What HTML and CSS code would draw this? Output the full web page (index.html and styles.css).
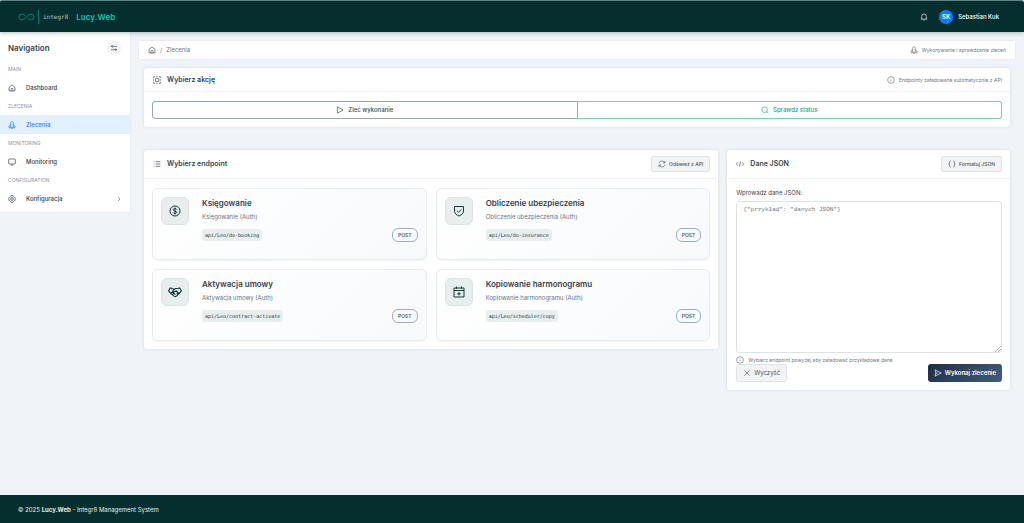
FILE: index.html
```
<!DOCTYPE html>
<html lang="pl">
<head>
    <meta charset="UTF-8">
    <meta name="viewport" content="width=device-width, initial-scale=1.0">
    <title>Lucy.Web - Zlecenia</title>
    <link rel="stylesheet" href="styles.css">
</head>
<body>

<svg class="sprite" xmlns="http://www.w3.org/2000/svg">
    <symbol id="home" viewBox="0 0 24 24"><path d="M3 10.500 12 2.500l9 8V19a2 2 0 0 1-2 2H5a2 2 0 0 1-2-2zM9 21v-5a3 3 0 0 1 6 0v5"/></symbol>
    <symbol id="rocket" viewBox="0 0 24 24"><path d="M7 18V9c0-3 2-6 5-8 3 2 5 5 5 8v9zM7 11l-4 5v5l4-1M17 11l4 5v5l-4-1M9 18v4h6v-4"/><path d="M12 8v4"/></symbol>
    <symbol id="monitor" viewBox="0 0 24 24"><rect x="2" y="3" width="20" height="15" rx="2"/><path d="M8 21.500h8"/></symbol>
    <symbol id="gear" viewBox="0 0 24 24"><path d="M9 2h6l1 3 3 1 3 3-1 3 1 3-3 3-3 1-1 3H9l-1-3-3-1-3-3 1-3-1-3 3-3 3-1z"/><circle cx="12" cy="12" r="4"/></symbol>
    <symbol id="swap" viewBox="0 0 24 24"><path d="M21 7H4M8 3 4 7l4 4M3 17h17M16 13l4 4-4 4"/></symbol>
    <symbol id="chevron" viewBox="0 0 24 24"><path d="m8 4 8 8-8 8"/></symbol>
    <symbol id="bell" viewBox="0 0 24 24"><path d="M5 18v-8a7 7 0 0 1 14 0v8M2.500 18.500h19M10 21.500h4"/></symbol>
    <symbol id="select" viewBox="0 0 24 24"><rect x="7" y="7" width="10" height="10" rx="2"/><path d="M2 6V2h4M18 2h4v4M22 18v4h-4M6 22H2v-4M10 2h4M10 22h4M2 10v4M22 10v4"/></symbol>
    <symbol id="info" viewBox="0 0 24 24"><circle cx="12" cy="12" r="10"/><path d="M12 11v6M12 7v1.500"/></symbol>
    <symbol id="play" viewBox="0 0 24 24"><path d="M4 2.500 21 12 4 21.500z"/></symbol>
    <symbol id="search" viewBox="0 0 24 24"><circle cx="11" cy="11" r="8.500"/><path d="m17 17 5 5"/></symbol>
    <symbol id="list" viewBox="0 0 24 24"><path d="M8 5h14M8 12h14M8 19h14M2 5h2M2 12h2M2 19h2"/></symbol>
    <symbol id="refresh" viewBox="0 0 24 24"><path d="M3 10C5 3 14 1 19.500 7M21 3v6h-6M21 14c-2 7-11 9-16.500 3M3 21v-6h6"/></symbol>
    <symbol id="code" viewBox="0 0 24 24"><path d="m6 7-5 5 5 5M18 7l5 5-5 5M14 4l-4 16"/></symbol>
    <symbol id="braces" viewBox="0 0 24 24"><path d="M8 3H6.500Q5 3 5 5v4q0 3-3 3 3 0 3 3v4q0 2 1.500 2H8M16 3h1.500Q19 3 19 5v4q0 3 3 3-3 0-3 3v4q0 2-1.500 2H16"/></symbol>
    <symbol id="close" viewBox="0 0 24 24"><path d="m4 4 16 16M20 4 4 20"/></symbol>
    <symbol id="send" viewBox="0 0 24 24"><path d="M3 2.500 22 12 3 21.500 5.500 12zM5.500 12H13"/></symbol>
    <symbol id="dollar" viewBox="0 0 24 24"><circle cx="12" cy="12" r="10"/><path d="M15.500 9c-.5-1.500-2-2-3.500-2-2 0-3.500.8-3.500 2.500 0 3.500 7 1.500 7 5 0 1.700-1.500 2.500-3.500 2.500-1.500 0-3-.5-3.500-2M12 5v14"/></symbol>
    <symbol id="shield" viewBox="0 0 24 24"><path d="M3 3h18v9c0 5-4 8-9 10-5-2-9-5-9-10zM8 11.500l3 3 5.500-5.500"/></symbol>
    <symbol id="handshake" viewBox="0 0 24 24"><path d="M4 5 1 10l3 4 7 5.500q1.500 1 3 0L20 14l3-4-3-5-3 1h-4.500L8 10.500c1.500 2 4 1.500 6-.5l5 4.500M4 5l4 1.500 3.500.5M5 14l2-2 3 2.500M8 16l2-2 3 2.500M15 13.500l2 3"/></symbol>
    <symbol id="calendar" viewBox="0 0 24 24"><path d="M2 4h20v18H2zM2 9h20M7 1v5M17 1v5M12 12v7M8.500 15.500h7"/></symbol>
</svg>

<header class="topbar">
    <a href="#" class="brand">
        <svg class="brand-mark" viewBox="0 0 36 16"><path d="M15 5C13 3 11 2 8 2a6 6 0 0 0 0 12C17 14 19 2 28 2a6 6 0 0 1 0 12c-3 0-5-1-7-3"/></svg>
        <span class="brand-company">integr8</span>
        <span class="brand-name">Lucy.Web</span>
    </a>
    <div class="topbar-right">
        <button class="bell" type="button" aria-label="Powiadomienia"><svg class="icon"><use href="#bell"/></svg></button>
        <a href="#" class="user"><span class="avatar">SK</span>Sebastian Kuk</a>
    </div>
</header>

<div class="layout">
    <aside class="sidebar">
        <div class="sidebar-head">
            <h2>Navigation</h2>
            <button class="toggle" type="button" aria-label="Toggle"><svg class="icon"><use href="#swap"/></svg></button>
        </div>
        <nav>
            <h3>MAIN</h3>
            <a href="#" class="nav-link"><svg class="icon"><use href="#home"/></svg>Dashboard</a>
            <h3>ZLECENIA</h3>
            <a href="#" class="nav-link active"><svg class="icon"><use href="#rocket"/></svg>Zlecenia</a>
            <h3>MONITORING</h3>
            <a href="#" class="nav-link"><svg class="icon"><use href="#monitor"/></svg>Monitoring</a>
            <h3>CONFIGURATION</h3>
            <a href="#" class="nav-link"><svg class="icon"><use href="#gear"/></svg>Konfiguracja<svg class="icon arrow"><use href="#chevron"/></svg></a>
        </nav>
    </aside>

    <main class="content">
        <div class="breadcrumbs">
            <a href="#" aria-label="Dashboard"><svg class="icon"><use href="#home"/></svg></a>
            <span>/</span>
            <span>Zlecenia</span>
            <span class="note"><svg class="icon"><use href="#rocket"/></svg>Wykonywanie i sprawdzanie zleceń</span>
        </div>

        <div class="page">
            <section class="card action-card">
                <div class="card-head small">
                    <svg class="icon"><use href="#select"/></svg>
                    <h2>Wybierz akcję</h2>
                    <span class="note"><svg class="icon"><use href="#info"/></svg>Endpointy załadowane automatycznie z API</span>
                </div>
                <div class="card-body">
                    <div class="btn-group">
                        <button class="run" type="button"><svg class="icon"><use href="#play"/></svg>Zleć wykonanie</button>
                        <button class="check" type="button"><svg class="icon"><use href="#search"/></svg>Sprawdź status</button>
                    </div>
                </div>
            </section>

            <section class="card endpoint-card">
                <div class="card-head">
                    <svg class="icon"><use href="#list"/></svg>
                    <h2>Wybierz endpoint</h2>
                    <button class="btn btn-small" type="button"><svg class="icon"><use href="#refresh"/></svg>Odśwież z API</button>
                </div>
                <div class="card-body tiles">
                    <article class="tile">
                        <div class="tile-icon"><svg class="icon"><use href="#dollar"/></svg></div>
                        <div class="tile-text">
                            <h3>Księgowanie</h3>
                            <p>Księgowanie (Auth)</p>
                            <div class="tile-row"><code>api/Leo/do-booking</code><span class="method">POST</span></div>
                        </div>
                    </article>
                    <article class="tile">
                        <div class="tile-icon"><svg class="icon"><use href="#shield"/></svg></div>
                        <div class="tile-text">
                            <h3>Obliczenie ubezpieczenia</h3>
                            <p>Obliczenie ubezpieczenia (Auth)</p>
                            <div class="tile-row"><code>api/Leo/do-insurance</code><span class="method">POST</span></div>
                        </div>
                    </article>
                    <article class="tile">
                        <div class="tile-icon"><svg class="icon wide"><use href="#handshake"/></svg></div>
                        <div class="tile-text">
                            <h3>Aktywacja umowy</h3>
                            <p>Aktywacja umowy (Auth)</p>
                            <div class="tile-row"><code>api/Leo/contract-activate</code><span class="method">POST</span></div>
                        </div>
                    </article>
                    <article class="tile">
                        <div class="tile-icon"><svg class="icon"><use href="#calendar"/></svg></div>
                        <div class="tile-text">
                            <h3>Kopiowanie harmonogramu</h3>
                            <p>Kopiowanie harmonogramu (Auth)</p>
                            <div class="tile-row"><code>api/Leo/scheduler/copy</code><span class="method">POST</span></div>
                        </div>
                    </article>
                </div>
            </section>

            <section class="card json-card">
                <div class="card-head">
                    <svg class="icon"><use href="#code"/></svg>
                    <h2>Dane JSON</h2>
                    <button class="btn btn-small" type="button"><svg class="icon"><use href="#braces"/></svg>Formatuj JSON</button>
                </div>
                <form class="card-body json-form">
                    <label for="json">Wprowadź dane JSON:</label>
                    <textarea id="json" name="json" placeholder='{"przykład": "danych JSON"}'></textarea>
                    <p class="help"><svg class="icon"><use href="#info"/></svg>Wybierz endpoint powyżej aby załadować przykładowe dane</p>
                    <div class="form-actions">
                        <button class="btn" type="reset"><svg class="icon"><use href="#close"/></svg>Wyczyść</button>
                        <button class="btn btn-primary" type="button"><svg class="icon"><use href="#send"/></svg>Wykonaj zlecenie</button>
                    </div>
                </form>
            </section>
        </div>
    </main>
</div>

<footer class="footer">© 2025 <b>Lucy.Web</b> - Integr8 Management System</footer>

</body>
</html>
```
FILE: styles.css
```
* {
  box-sizing: border-box;
}

body {
  margin: 0;
  min-height: 100vh;
  display: flex;
  flex-direction: column;
  background-color: #f0f3f8;
  color: #343f4b;
  font-family: Inter, "Liberation Sans", sans-serif;
  font-size: 6px;
  line-height: 8px;
}

h2, h3, p {
  margin: 0;
}

a {
  color: inherit;
  text-decoration: none;
}

button {
  font: inherit;
  color: inherit;
  cursor: pointer;
}

.sprite {
  display: none;
}

.icon {
  width: 8px;
  height: 8px;
  flex: none;
  fill: none;
  stroke: currentColor;
  stroke-width: 2;
}

/* top bar */
.topbar {
  height: 32px;
  display: flex;
  align-items: center;
  justify-content: space-between;
  padding: 0 25px 0 18px;
  background-color: #042f2e;
  border-top: 1px solid #5f8584;
  border-radius: 2px 3px 0 0;
  box-shadow: 0 1px 4px rgba(4, 47, 46, 0.3);
  color: white;
  z-index: 1;
}

.brand {
  display: flex;
  align-items: center;
}

.brand-mark {
  width: 17px;
  height: 8px;
  fill: none;
  stroke: #12857b;
  stroke-width: 2;
}

.brand-company {
  margin-left: 3px;
  padding: 3px 8px 3px 4px;
  border-left: 1px solid #0f766e;
  color: #b4c4c3;
  font-family: "DejaVu Sans Mono", monospace;
  font-size: 6px;
}

.brand-name {
  color: #14b8a6;
  font-size: 8px;
  font-weight: 700;
}

.topbar-right {
  display: flex;
  align-items: center;
  gap: 11px;
}

.bell {
  display: flex;
  padding: 0;
  border: 0;
  background: none;
}

.user {
  display: flex;
  align-items: center;
  gap: 5px;
  font-weight: 500;
}

.avatar {
  width: 14px;
  height: 14px;
  border-radius: 50%;
  background-color: #0d7dfd;
  font-weight: 600;
  line-height: 14px;
  text-align: center;
}

.layout {
  flex: 1;
  display: flex;
  align-items: flex-start;
}

/* sidebar */
.sidebar {
  width: 130px;
  flex: none;
  padding-bottom: 4px;
  background-color: white;
  box-shadow: 0 0 2px rgba(50, 70, 90, 0.1);
}

.sidebar-head {
  height: 28px;
  display: flex;
  align-items: center;
  justify-content: space-between;
  padding: 4px 9px 0 8px;
}

.sidebar-head h2 {
  font-size: 8px;
  font-weight: 600;
}

.toggle {
  width: 14px;
  height: 14px;
  display: flex;
  align-items: center;
  justify-content: center;
  padding: 0;
  border: 0;
  border-radius: 50%;
  background-color: #f0f3f6;
}

.sidebar h3 {
  padding: 5px 8px;
  color: #8b95a0;
  font-size: 5px;
  font-weight: 400;
}

.nav-link {
  height: 19px;
  display: flex;
  align-items: center;
  gap: 10px;
  padding: 0 8px;
  font-weight: 500;
}

.nav-link.active {
  background-color: #e2f0ff;
  color: #1784ff;
}

.arrow {
  width: 6px;
  height: 6px;
  margin-left: auto;
}

/* content */
.content {
  flex: 1;
  min-width: 0;
  padding: 9px 9px 0;
}

.breadcrumbs {
  height: 18px;
  display: flex;
  align-items: center;
  gap: 4px;
  padding: 0 9px;
  background-color: white;
  box-shadow: 0 0 2px rgba(50, 70, 90, 0.1);
  color: #6b7682;
}

.breadcrumbs a {
  display: flex;
  color: #343f4b;
}

.note {
  display: flex;
  align-items: center;
  gap: 4px;
  margin-left: auto;
  color: #6b7682;
  font-size: 5px;
}

.page {
  display: grid;
  grid-template-columns: repeat(12, 1fr);
  align-items: start;
  column-gap: 9px;
  row-gap: 23px;
  padding: 9px 5px;
}

.card {
  background-color: white;
  border-radius: 3px;
  box-shadow: 0 0 3px rgba(50, 70, 90, 0.15);
}

.action-card {
  grid-column: span 12;
}

.endpoint-card {
  grid-column: span 8;
}

.json-card {
  grid-column: span 4;
}

.card-head {
  height: 29px;
  display: flex;
  align-items: center;
  gap: 6px;
  padding: 0 8px 0 9px;
  border-bottom: 1px solid #f0f4f6;
}

.card-head.small {
  height: 24px;
}

.card-head h2 {
  font-size: 7px;
  font-weight: 600;
}

.card-body {
  padding: 9px 8px 8px;
}

.btn-group {
  display: flex;
}

.btn-group button {
  flex: 1;
  height: 18px;
  display: flex;
  align-items: center;
  justify-content: center;
  gap: 4px;
  padding: 0;
  background-color: white;
  font-weight: 500;
}

.btn-group .run {
  border: 1px solid #8fa5b2;
  border-radius: 3px 0 0 3px;
  color: #2b5453;
}

.btn-group .check {
  border: 1px solid #7fccae;
  border-left: 0;
  border-radius: 0 3px 3px 0;
  color: #1fa874;
}

.btn {
  height: 18px;
  display: flex;
  align-items: center;
  gap: 3px;
  padding: 0 6px;
  border: 1px solid #dfe3e7;
  border-radius: 3px;
  background-color: #f1f3f5;
  color: #4a5561;
}

.btn-small {
  height: 16px;
  margin-left: auto;
  border-radius: 2px;
  font-size: 5px;
  font-weight: 500;
}

.btn-primary {
  border: 0;
  background: linear-gradient(135deg, #1e2f43, #415d7e);
  color: white;
  font-weight: 600;
}

/* endpoint tiles */
.tiles {
  display: grid;
  grid-template-columns: 1fr 1fr;
  gap: 9px;
}

.tile {
  display: flex;
  gap: 13px;
  padding: 8px 8px 17px;
  border: 1px solid #e6ebee;
  border-radius: 6px;
  background: linear-gradient(135deg, #ffffff, #f7f9fb);
  box-shadow: 0 1px 2px rgba(50, 70, 90, 0.06);
}

.tile-icon {
  width: 28px;
  height: 28px;
  flex: none;
  display: flex;
  align-items: center;
  justify-content: center;
  border: 1px solid #dbe3e3;
  border-radius: 6px;
  background-color: #e8eded;
  color: #0f3d3c;
}

.tile-icon .icon {
  width: 12px;
  height: 12px;
}

.tile-icon .wide {
  width: 14px;
  height: 14px;
}

.tile-text {
  flex: 1;
  min-width: 0;
}

.tile-text h3 {
  font-size: 8px;
  font-weight: 600;
  line-height: 13px;
}

.tile-text p {
  color: #6b7682;
  line-height: 13px;
}

.tile-row {
  display: flex;
  align-items: center;
  justify-content: space-between;
  padding-top: 5px;
}

code {
  padding: 2px 3px;
  border-radius: 3px;
  background-color: #e8eeed;
  color: #0f3d3c;
  font-family: "DejaVu Sans Mono", monospace;
  font-size: 5px;
}

.method {
  padding: 2px 5px;
  border: 1px solid #9dadc0;
  border-radius: 6px;
  color: #4d6078;
  font-size: 5px;
  font-weight: 600;
}

/* json form */
.json-form {
  display: flex;
  flex-direction: column;
  padding-left: 9px;
}

.json-form label {
  padding: 1px 0 4px;
}

.json-form textarea {
  height: 152px;
  padding: 4px 6px;
  border: 1px solid #dde2e7;
  border-radius: 3px;
  background-color: white;
  color: #343f4b;
  font-family: "Liberation Mono", monospace;
  font-size: 6px;
  line-height: 8px;
  resize: vertical;
}

.json-form textarea::placeholder {
  color: #6b7682;
}

.json-form textarea::-webkit-resizer {
  background: linear-gradient(135deg, transparent 78%, #a9b0b7 78%, #a9b0b7 82%, transparent 82%, transparent 88%, #a9b0b7 88%, #a9b0b7 92%, transparent 92%);
}

.help {
  display: flex;
  align-items: center;
  gap: 4px;
  padding-top: 3px;
  color: #6b7682;
  font-size: 5px;
}

.form-actions {
  display: flex;
  justify-content: space-between;
}

.footer {
  padding: 11px 18px 9px;
  background-color: #042f2e;
  color: #e6eeed;
}
```
